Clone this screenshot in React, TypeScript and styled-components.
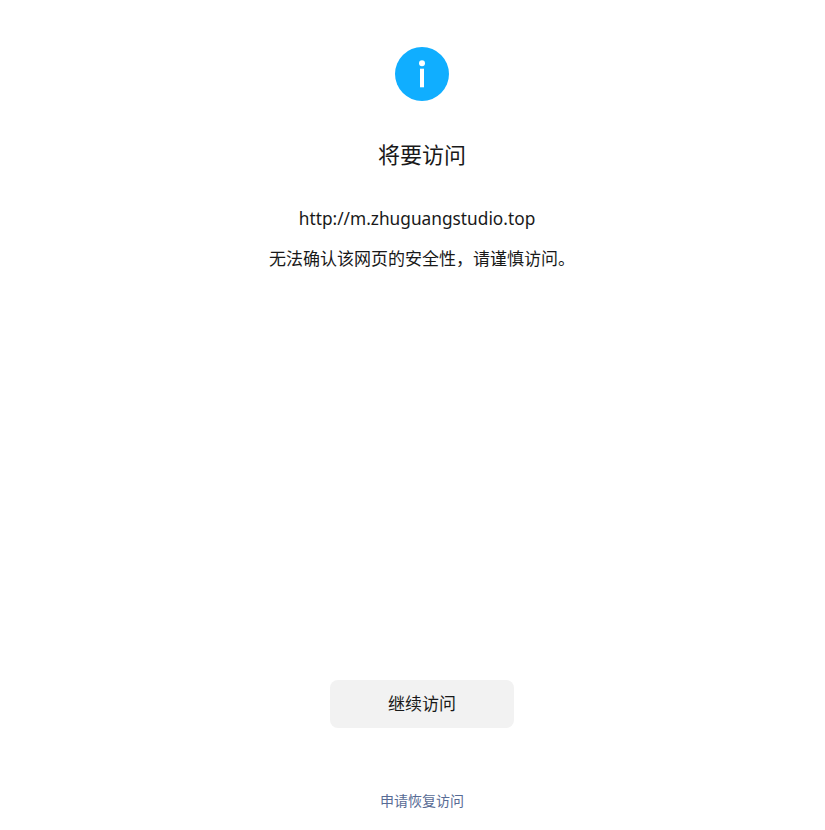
import { createGlobalStyle, styled } from "styled-components";

const GlobalStyle = createGlobalStyle`
  html, body {
    margin: 0;
    padding: 0;
    background: #fff;
    overflow: hidden;
  }
  body {
    font-family: "Noto Sans", "Noto Sans CJK SC", sans-serif;
  }
`;

const Page = styled.div`
  width: 844px;
  height: 830px;
  overflow: hidden;
  display: flex;
  flex-direction: column;
  align-items: center;
  box-sizing: border-box;
  padding-top: 47px;
`;

const IconCircle = styled.svg`
  width: 54px;
  height: 54px;
  display: block;
`;

const Title = styled.h1`
  margin: 37px 0 0;
  font-size: 22px;
  line-height: 32px;
  font-weight: 400;
  color: #191919;
`;

const Url = styled.p`
  margin: 37px 10px 0 0;
  font-size: 17.3px;
  line-height: 24px;
  color: #191919;
`;

const Warning = styled.p`
  margin: 16px 0 0;
  font-size: 17px;
  line-height: 24px;
  color: #191919;
`;

const ContinueButton = styled.button`
  margin-top: 409px;
  width: 184px;
  height: 48px;
  padding: 0 0 4px;
  border: none;
  border-radius: 8px;
  background: #f2f2f2;
  color: #191919;
  font-family: inherit;
  font-size: 17px;
`;

const AppealLink = styled.a`
  margin-top: 63px;
  font-size: 14px;
  line-height: 20px;
  color: #576b95;
`;

export default function App() {
  return (
    <Page>
      <GlobalStyle />
      <IconCircle viewBox="0 0 54 54">
        <circle cx="27" cy="27" r="27" fill="#10aeff" />
        <circle cx="27" cy="16.3" r="3" fill="#fff" />
        <rect x="25" y="21.7" width="4" height="18.6" fill="#fff" />
      </IconCircle>
      <Title>将要访问</Title>
      <Url>http://m.zhuguangstudio.top</Url>
      <Warning>无法确认该网页的安全性，请谨慎访问。</Warning>
      <ContinueButton>继续访问</ContinueButton>
      <AppealLink>申请恢复访问</AppealLink>
    </Page>
  );
}
